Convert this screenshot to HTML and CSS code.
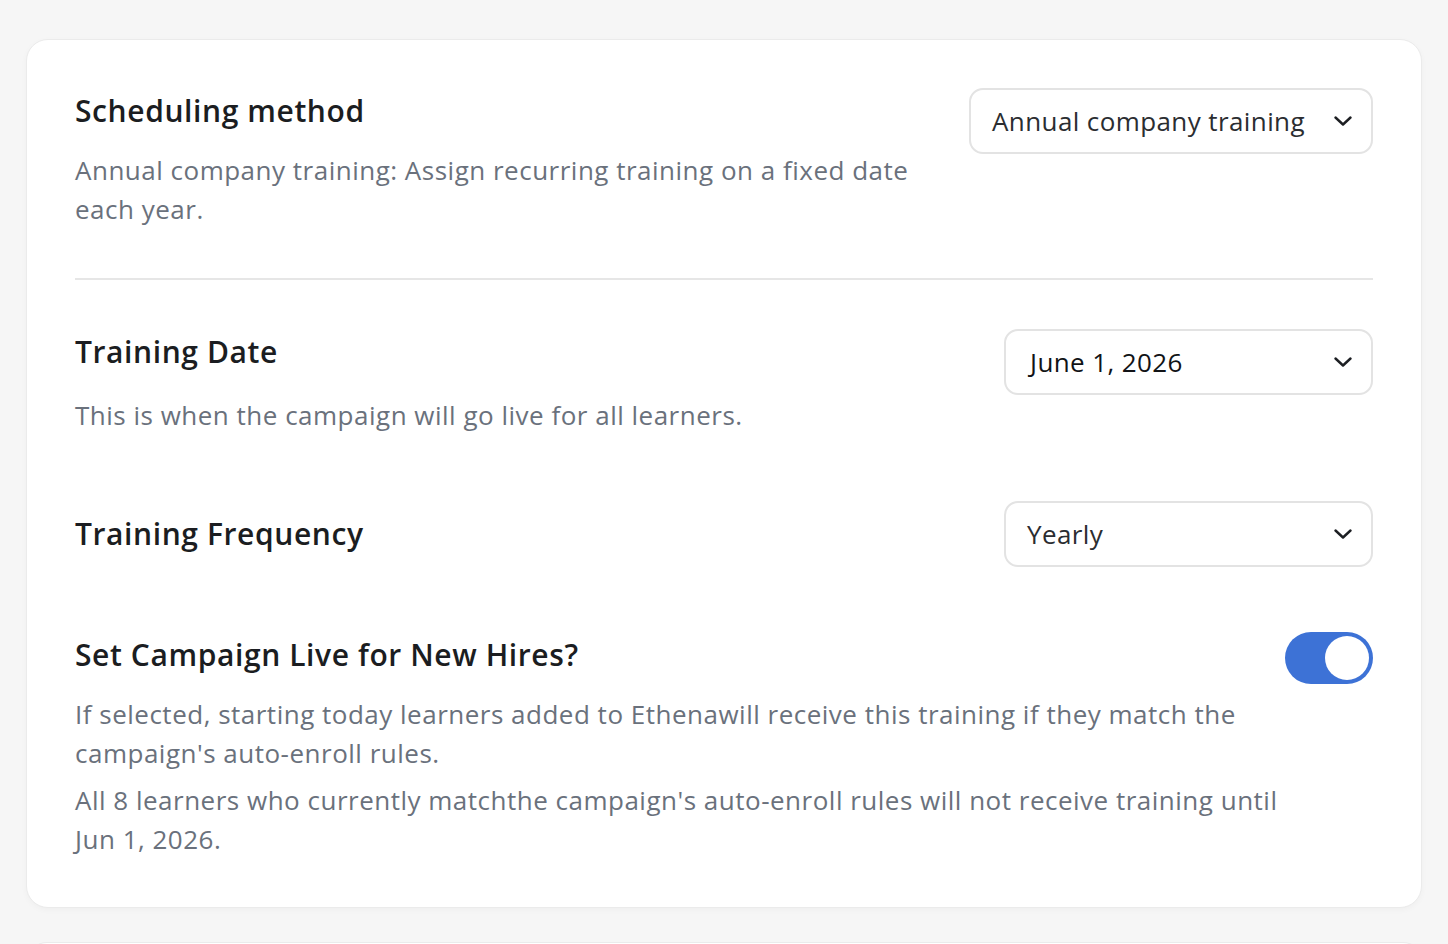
FILE: index.html
```html
<!DOCTYPE html>
<html>
<head>
<meta charset="utf-8">
<link rel="stylesheet" href="styles.css">
</head>
<body>
<div class="card">
  <div class="row row-top">
    <div class="info">
      <div class="title">Scheduling method</div>
      <p class="desc first">Annual company training: Assign recurring training on a fixed date<br>each year.</p>
    </div>
    <div class="select select-wide">
      <span class="select-text">Annual company training</span>
      <svg class="chev" viewBox="0 0 18 10" width="18" height="10"><path d="M1.5 1.5 L9 8.5 L16.5 1.5" fill="none" stroke="#1d1f23" stroke-width="2.4" stroke-linecap="round" stroke-linejoin="round"/></svg>
    </div>
  </div>
  <div class="divider"></div>
  <div class="row row-top row-date">
    <div class="info">
      <div class="title">Training Date</div>
      <p class="desc first date-desc">This is when the campaign will go live for all learners.</p>
    </div>
    <div class="select select-date">
      <span class="select-text dark">June 1, 2026</span>
      <svg class="chev" viewBox="0 0 18 10" width="18" height="10"><path d="M1.5 1.5 L9 8.5 L16.5 1.5" fill="none" stroke="#1d1f23" stroke-width="2.4" stroke-linecap="round" stroke-linejoin="round"/></svg>
    </div>
  </div>
  <div class="row row-center row-freq">
    <div class="info">
      <div class="title">Training Frequency</div>
    </div>
    <div class="select select-freq">
      <span class="select-text">Yearly</span>
      <svg class="chev" viewBox="0 0 18 10" width="18" height="10"><path d="M1.5 1.5 L9 8.5 L16.5 1.5" fill="none" stroke="#1d1f23" stroke-width="2.4" stroke-linecap="round" stroke-linejoin="round"/></svg>
    </div>
  </div>
  <div class="row row-top row-hire">
    <div class="info">
      <div class="title">Set Campaign Live for New Hires?</div>
      <p class="desc first">If selected, starting today learners added to Ethenawill receive this training if they match the<br>campaign's auto-enroll rules.</p>
      <p class="desc second">All 8 learners who currently matchthe campaign's auto-enroll rules will not receive training until<br>Jun 1, 2026.</p>
    </div>
    <div class="toggle"><span class="knob"></span></div>
  </div>
</div>
<div class="card-next"></div>
</body>
</html>
```
FILE: styles.css
```css
html, body {
  margin: 0;
  padding: 0;
}
body {
  background: #f6f6f6;
  font-family: "Open Sans", "Noto Sans", sans-serif;
  padding: 39px 26px 0 26px;
  overflow: hidden;
  height: 944px;
  box-sizing: border-box;
}
.card {
  background: #ffffff;
  border: 1px solid #ebebeb;
  border-radius: 22px;
  box-shadow: 0 2px 6px rgba(0,0,0,0.03);
  padding: 48px 48px 48px 48px;
  box-sizing: border-box;
  width: 1396px;
  height: 869px;
}
.card-next {
  margin-top: 34px;
  height: 40px;
  width: 1396px;
  background: #ffffff;
  border: 1px solid #ebebeb;
  border-radius: 22px;
}
.row {
  display: flex;
  justify-content: space-between;
  gap: 8px;
}
.row-top { align-items: flex-start; }
.row-center { align-items: center; }
.info { flex: 1; min-width: 0; white-space: nowrap; }
.title {
  font-size: 30px;
  line-height: 46px;
  font-weight: 600;
  color: #1b1d21;
  letter-spacing: 0.6px;
}
.desc {
  margin: 0;
  font-size: 26px;
  line-height: 39px;
  color: #6a717c;
  letter-spacing: 0.5px;
}
.desc.first { margin-top: 17px; }
.desc.date-desc { margin-top: 21px; }
.desc.second { margin-top: 8px; }
.divider {
  height: 2px;
  background: #e6e6e6;
  margin: 49px 0 49px 0;
}
.row-freq { margin-top: 66px; }
.row-hire { margin-top: 65px; }
.select {
  flex: none;
  box-sizing: border-box;
  height: 66px;
  border: 2px solid #e3e3e3;
  border-radius: 14px;
  background: #fff;
  display: flex;
  align-items: center;
  justify-content: space-between;
  padding: 0 19px 0 21px;
}
.select-wide { width: 404px; }
.select-date { width: 369px; padding-left: 24px; }
.select-freq { width: 369px; }
.select-text {
  font-size: 26px;
  color: #2b2d31;
  letter-spacing: 0.4px;
}
.select-text.dark { color: #111316; }
.chev { display: block; }
.toggle {
  flex: none;
  width: 88px;
  height: 52px;
  border-radius: 26px;
  background: #3d72d6;
  display: flex;
  align-items: center;
  justify-content: flex-end;
  padding: 0 4px;
  box-sizing: border-box;
}
.knob {
  width: 44px;
  height: 44px;
  border-radius: 50%;
  background: #fff;
}
```
